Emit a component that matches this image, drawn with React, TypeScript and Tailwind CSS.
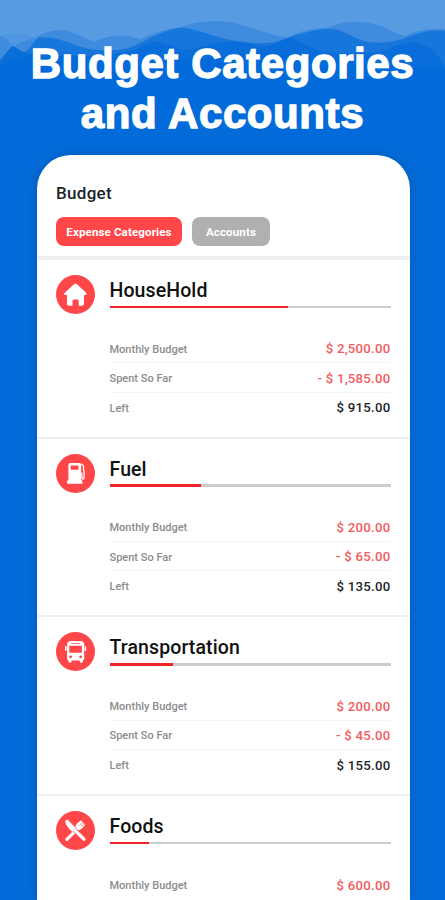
import type { ReactNode } from "react";

interface Category {
  name: string;
  rows: { label: string; value: string; negative?: boolean }[];
  progress: number;
  icon: ReactNode;
}

function HomeIcon() {
  return (
    <svg className="h-[39px] w-[39px]" viewBox="0 0 39 39" fill="#fff">
      <path d="M18.2 9.100a1.800 1.800 0 0 1 2.500 0l9.400 8.700c1.200 1.100.7 2.200-.6 2.200H28v8.600c0 1.400-.7 2.200-2 2.200h-3.300v-4.600c0-1-.6-1.600-1.600-1.600h-3c-1 0-1.600.6-1.600 1.600v4.600H13c-1.300 0-2-.8-2-2.200V20H9.400c-1.300 0-1.800-1.100-.6-2.200z" />
    </svg>
  );
}

function FuelIcon() {
  return (
    <svg className="h-[39px] w-[39px]" viewBox="0 0 39 39">
      <path
        fill="#fff"
        fillRule="evenodd"
        d="M14.200 9h8.600a2.300 2.300 0 0 1 2.300 2.300v14.600l1.300 1.200v2.600H11.100v-2.600l1.300-1.200V11.300A2.300 2.300 0 0 1 14.200 9zM14.700 11.600v4.200h7.800v-4.200z"
      />
      <path
        d="M25 9.700l2.500 2.300v4.200l.6 1.100v6.500c0 1.800-2.200 1.800-2.200 0V18.500"
        fill="none"
        stroke="#fff"
        strokeWidth="1.300"
      />
    </svg>
  );
}

function BusIcon() {
  return (
    <svg className="h-[39px] w-[39px]" viewBox="0 0 39 39" fill="#fff">
      <path
        fillRule="evenodd"
        d="M15 9h9.200c2.900 0 4 1.500 4 3.600v14c0 1-.5 1.600-1.300 1.900v.9c0 1.700-3.100 1.700-3.100 0v-.9h-8.300v.9c0 1.700-3.100 1.700-3.100 0v-.9c-.8-.3-1.300-.9-1.300-1.900v-14C11.100 10.500 12.200 9 15 9zM15.300 10.900v.8h8.600v-.8zM13.300 13.700v6.100c0 .7.3 1 1 1h10.600c.7 0 1-.3 1-1v-6.100zM14.600 23.400a1.400 1.400 0 1 0 0 2.800 1.400 1.400 0 0 0 0-2.800zM24.600 23.400a1.400 1.400 0 1 0 0 2.800 1.400 1.400 0 0 0 0-2.800z"
      />
      <rect x="9.100" y="14" width="1.500" height="5" rx=".7" />
      <rect x="28.600" y="14" width="1.500" height="5" rx=".7" />
    </svg>
  );
}

function FoodIcon() {
  return (
    <svg className="h-[39px] w-[39px]" viewBox="0 0 39 39">
      <path d="M10.900 28.300L22 17.400" stroke="#fff" strokeWidth="3.200" strokeLinecap="round" />
      <path d="M19.500 16.700c-.2-2.800 1.200-4.300 5.400-7.500l4.300 4.500c-3 4-4.600 5.200-7 5.200z" fill="#fff" />
      <path d="M23.300 14.600l3.300-3.400M25 15.700l3.200-3.200" stroke="#ff4649" strokeWidth=".7" />
      <path d="M9.300 10c1-2 2.500-1.100 3.600 0l7.300 7.600-3.500 3.600c-3-2.300-7.400-7-7.400-11.200z" fill="#fff" />
      <path d="M18 18.400l10 9.900" stroke="#ff4649" strokeWidth="4.500" />
      <path d="M17 17.500l10.900 10.600" stroke="#fff" strokeWidth="3.400" strokeLinecap="round" />
    </svg>
  );
}

const categories: Category[] = [
  {
    name: "HouseHold",
    progress: 63.4,
    icon: <HomeIcon />,
    rows: [
      { label: "Monthly Budget", value: "$ 2,500.00", negative: true },
      { label: "Spent So Far", value: "- $ 1,585.00", negative: true },
      { label: "Left", value: "$ 915.00" },
    ],
  },
  {
    name: "Fuel",
    progress: 32.5,
    icon: <FuelIcon />,
    rows: [
      { label: "Monthly Budget", value: "$ 200.00", negative: true },
      { label: "Spent So Far", value: "- $ 65.00", negative: true },
      { label: "Left", value: "$ 135.00" },
    ],
  },
  {
    name: "Transportation",
    progress: 22.5,
    icon: <BusIcon />,
    rows: [
      { label: "Monthly Budget", value: "$ 200.00", negative: true },
      { label: "Spent So Far", value: "- $ 45.00", negative: true },
      { label: "Left", value: "$ 155.00" },
    ],
  },
  {
    name: "Foods",
    progress: 14.1,
    icon: <FoodIcon />,
    rows: [{ label: "Monthly Budget", value: "$ 600.00", negative: true }],
  },
];

function Waves() {
  return (
    <svg className="absolute inset-x-0 top-0 h-[80px] w-full" viewBox="0 0 1335 240" preserveAspectRatio="none">
      <rect width="1335" height="240" fill="#579be2" />
      <path
        fill="#3f8cdf"
        d="M0 108C30 101 70 101 105 115C130 98 155 90 190 91C225 95 250 116 285 125C330 102 375 101 420 118C460 98 500 88 540 82C590 62 650 58 700 68C760 80 810 108 865 112C900 91 950 84 980 85C1020 64 1080 61 1130 74C1160 83 1190 103 1215 108C1260 88 1300 84 1335 88V240H0z"
      />
      <path fill="#579be2" d="M5 108C30 101 65 101 100 115C75 122 55 130 40 140C28 125 15 115 5 108z" opacity=".7" />
      <path
        fill="#1776dc"
        d="M0 182C14 164 25 150 38 138C52 146 65 154 76 156C92 144 100 125 115 112C160 108 200 125 235 138C270 150 300 152 350 150C390 148 420 130 460 108C490 98 520 83 545 83C590 85 640 112 700 121C760 132 815 136 860 115C910 98 960 84 1000 87C1040 93 1070 122 1110 127C1160 132 1200 121 1240 105C1270 94 1300 88 1335 93V240H0z"
      />
      <path
        fill="#096eda"
        d="M0 182C14 164 25 150 38 138C56 150 72 159 90 162C180 172 300 172 375 157C430 143 440 128 465 125C500 128 520 144 550 150C610 145 650 124 700 125C750 127 780 139 805 139C830 133 850 114 870 115C900 121 935 147 970 154C1030 160 1080 165 1140 153C1185 143 1210 125 1240 126C1285 131 1315 163 1335 200V240H0z"
      />
      <path fill="#036bd9" d="M0 195Q60 165 120 165T400 175T700 165T1000 175T1335 205V240H0z" />
    </svg>
  );
}

function CategorySection({ category }: { category: Category }) {
  return (
    <section className="flex h-[178.700px] items-start border-b-2 border-[#efefef] px-[19px] pt-[15px]">
      <div className="h-[39px] w-[39px] shrink-0 rounded-full bg-[#ff4649]">{category.icon}</div>
      <div className="ml-[15px] flex-1">
        <h2 className="h-[30.700px] pt-px text-[19.500px] font-medium leading-[29px] tracking-[0.1px] text-[#111]">
          {category.name}
        </h2>
        <div className="h-[2.500px] bg-[#ccc]">
          <div className="h-full bg-[#ee2429]" style={{ width: `${category.progress}%` }} />
        </div>
        <div className="mt-[26.100px]">
          {category.rows.map((row) => (
            <div
              key={row.label}
              className="flex h-[29.200px] items-center justify-between border-b border-[#f5f5f5] pt-[2px] last:border-b-0"
            >
              <span className="pt-px text-[11px] font-medium text-[#8c8c8c]">{row.label}</span>
              <span
                className={`text-[13.200px] font-medium tracking-[0.25px] ${row.negative ? "text-[#f45b5e]" : "text-[#1b2529]"}`}
              >
                {row.value}
              </span>
            </div>
          ))}
        </div>
      </div>
    </section>
  );
}

export default function App() {
  return (
    <div className="relative h-[900px] w-full overflow-hidden bg-[#036bd9] font-['Roboto',sans-serif]">
      <Waves />
      <h1 className="relative h-[155px] whitespace-nowrap pt-[39px] text-center font-['Liberation_Sans',sans-serif] text-[42px] font-bold leading-[50px] tracking-[0.6px] text-white [-webkit-text-stroke:1.300px_white]">
        Budget Categories
        <br />
        and Accounts
      </h1>
      <main className="relative ml-[36.500px] h-[745px] w-[373px] overflow-hidden rounded-t-[34px] bg-white shadow-[0_0_12px_rgba(0,50,110,0.3)]">
        <header className="h-[105px] border-b-4 border-[#f0f0f0] pl-[19.500px] pt-[27px]">
          <p className="text-[17px] font-medium leading-[22px] tracking-[0.3px] text-[#1b2529]">Budget</p>
          <div className="mt-[13px] flex gap-[10px] text-[11.500px] font-bold tracking-[0.15px] text-white">
            <button className="h-[29px] w-[126px] rounded-[8px] bg-[#ff4649] pt-[2px]">Expense Categories</button>
            <button className="h-[29px] w-[78px] rounded-[8px] bg-[#b0b0b0] pt-[2px]">Accounts</button>
          </div>
        </header>
        {categories.map((category) => (
          <CategorySection key={category.name} category={category} />
        ))}
      </main>
    </div>
  );
}
